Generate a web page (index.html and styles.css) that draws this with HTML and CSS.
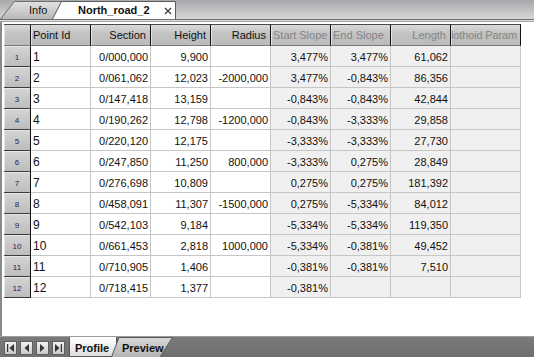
FILE: index.html
```html
<!DOCTYPE html>
<html>
<head>
<meta charset="utf-8">
<link rel="stylesheet" href="styles.css">
</head>
<body>
<div class="window">
  <div class="tabbar">
    <div class="tab tab-info">
      <svg class="tabshape" width="63" height="19" viewBox="0 0 63 19">
        <defs><linearGradient id="gi" x1="0" y1="0" x2="0" y2="1"><stop offset="0" stop-color="#e2e2e2"/><stop offset="1" stop-color="#b9b9b9"/></linearGradient></defs>
        <path d="M0.5 19 L14.5 1.5 L62.5 1.5 L62.5 19" fill="url(#gi)" stroke="#6e6e6e"/>
      </svg>
      <span class="tablabel">Info</span>
    </div>
    <div class="tab tab-active">
      <svg class="tabshape" width="125" height="19" viewBox="0 0 125 19">
        <path d="M0.5 19 L9.5 1.5 L123.5 1.5 L123.5 19" fill="#ffffff" stroke="#5a5a5a"/>
      </svg>
      <span class="tablabel bold">North_road_2</span>
      <svg class="close" width="8" height="8" viewBox="0 0 8 8"><path d="M1 1 L7 7 M7 1 L1 7" stroke="#3c3c3c" stroke-width="1.3"/></svg>
    </div>
  </div>
  <div class="rule"></div>
  <div class="frame">
    <div class="grid">
      <div class="h corner"></div>
      <div class="h left">Point Id</div>
      <div class="h">Section</div>
      <div class="h">Height</div>
      <div class="h">Radius</div>
      <div class="h left dim">Start Slope</div>
      <div class="h left dim">End Slope</div>
      <div class="h dim">Length</div>
      <div class="h dim clip"><span class="cliptext">Clothoid Param</span></div>

      <div class="rh">1</div><div class="c l">1</div><div class="c">0/000,000</div><div class="c">9,900</div><div class="c"></div><div class="c g">3,477%</div><div class="c g">3,477%</div><div class="c g">61,062</div><div class="c g"></div>
      <div class="rh">2</div><div class="c l">2</div><div class="c">0/061,062</div><div class="c">12,023</div><div class="c">-2000,000</div><div class="c g">3,477%</div><div class="c g">-0,843%</div><div class="c g">86,356</div><div class="c g"></div>
      <div class="rh">3</div><div class="c l">3</div><div class="c">0/147,418</div><div class="c">13,159</div><div class="c"></div><div class="c g">-0,843%</div><div class="c g">-0,843%</div><div class="c g">42,844</div><div class="c g"></div>
      <div class="rh">4</div><div class="c l">4</div><div class="c">0/190,262</div><div class="c">12,798</div><div class="c">-1200,000</div><div class="c g">-0,843%</div><div class="c g">-3,333%</div><div class="c g">29,858</div><div class="c g"></div>
      <div class="rh">5</div><div class="c l">5</div><div class="c">0/220,120</div><div class="c">12,175</div><div class="c"></div><div class="c g">-3,333%</div><div class="c g">-3,333%</div><div class="c g">27,730</div><div class="c g"></div>
      <div class="rh">6</div><div class="c l">6</div><div class="c">0/247,850</div><div class="c">11,250</div><div class="c">800,000</div><div class="c g">-3,333%</div><div class="c g">0,275%</div><div class="c g">28,849</div><div class="c g"></div>
      <div class="rh">7</div><div class="c l">7</div><div class="c">0/276,698</div><div class="c">10,809</div><div class="c"></div><div class="c g">0,275%</div><div class="c g">0,275%</div><div class="c g">181,392</div><div class="c g"></div>
      <div class="rh">8</div><div class="c l">8</div><div class="c">0/458,091</div><div class="c">11,307</div><div class="c">-1500,000</div><div class="c g">0,275%</div><div class="c g">-5,334%</div><div class="c g">84,012</div><div class="c g"></div>
      <div class="rh">9</div><div class="c l">9</div><div class="c">0/542,103</div><div class="c">9,184</div><div class="c"></div><div class="c g">-5,334%</div><div class="c g">-5,334%</div><div class="c g">119,350</div><div class="c g"></div>
      <div class="rh">10</div><div class="c l">10</div><div class="c">0/661,453</div><div class="c">2,818</div><div class="c">1000,000</div><div class="c g">-5,334%</div><div class="c g">-0,381%</div><div class="c g">49,452</div><div class="c g"></div>
      <div class="rh">11</div><div class="c l">11</div><div class="c">0/710,905</div><div class="c">1,406</div><div class="c"></div><div class="c g">-0,381%</div><div class="c g">-0,381%</div><div class="c g">7,510</div><div class="c g"></div>
      <div class="rh">12</div><div class="c l">12</div><div class="c">0/718,415</div><div class="c">1,377</div><div class="c"></div><div class="c g">-0,381%</div><div class="c g"></div><div class="c g"></div><div class="c g"></div>
    </div>
  </div>
  <div class="bottombar">
    <div class="navs">
      <div class="nav"><svg width="9" height="8" viewBox="0 0 9 8"><rect x="1" y="0" width="1.2" height="8" fill="#333"/><path d="M8 0 L8 8 L3.5 4 Z" fill="#333"/></svg></div>
      <div class="nav"><svg width="9" height="8" viewBox="0 0 9 8"><path d="M7 0 L7 8 L2.5 4 Z" fill="#333"/></svg></div>
      <div class="nav"><svg width="9" height="8" viewBox="0 0 9 8"><path d="M2 0 L2 8 L6.5 4 Z" fill="#333"/></svg></div>
      <div class="nav"><svg width="9" height="8" viewBox="0 0 9 8"><path d="M1 0 L1 8 L5.5 4 Z" fill="#333"/><rect x="6.8" y="0" width="1.2" height="8" fill="#333"/></svg></div>
    </div>
    <div class="stab stab-profile">
      <svg class="tabshape" width="48" height="20" viewBox="0 0 48 20">
        <defs><linearGradient id="gp" x1="0" y1="0" x2="0" y2="1"><stop offset="0" stop-color="#ffffff"/><stop offset="1" stop-color="#dcdcdc"/></linearGradient></defs>
        <path d="M0.5 0 L0.5 19.5 L47.5 19.5 L47.5 0" fill="url(#gp)" stroke="#5a5a5a"/>
      </svg>
      <span class="stablabel">Profile</span>
    </div>
    <div class="stab stab-preview">
      <svg class="tabshape" width="62" height="20" viewBox="0 0 62 20">
        <defs><linearGradient id="gv" x1="0" y1="0" x2="0" y2="1"><stop offset="0" stop-color="#d8d8d8"/><stop offset="1" stop-color="#b4b4b4"/></linearGradient></defs>
        <path d="M0.5 20 L8 0.5 L61.5 0.5 L49 20" fill="url(#gv)" stroke="#5a5a5a"/>
      </svg>
      <span class="stablabel">Preview</span>
    </div>
  </div>
</div>
</body>
</html>
```

FILE: styles.css
```css
* { box-sizing: border-box; }
html, body { margin: 0; padding: 0; }
body {
  width: 534px;
  height: 357px;
  overflow: hidden;
  background: #ffffff;
  font-family: "Liberation Sans", Arial, sans-serif;
  font-size: 11px;
  color: #111;
}
.window {
  display: flex;
  flex-direction: column;
  width: 534px;
  height: 357px;
}
.tabbar {
  height: 19px;
  display: flex;
  align-items: flex-end;
  background: linear-gradient(#a6a8ab, #d6d6d6);
  flex: none;
}
.tab {
  position: relative;
  height: 19px;
  display: flex;
  align-items: center;
}
.tabshape {
  position: absolute;
  left: 0;
  top: 0;
}
.tablabel {
  position: relative;
  line-height: 19px;
  padding-top: 1px;
}
.bold { font-weight: bold; }
.tab-info {
  width: 63px;
  padding-left: 29px;
}
.tab-active {
  width: 125px;
  margin-left: -11px;
  padding-left: 26px;
}
.close {
  position: relative;
  margin-left: 14px;
  margin-top: 2px;
}
.rule {
  height: 3px;
  flex: none;
  border-top: 1px solid #6e6e6e;
  border-bottom: 1px solid #a4a4a4;
  background: #dedede;
}
.frame {
  flex: 1;
  border-left: 2px solid #8a8a8a;
  padding: 2px 0 0 2px;
  background: #ffffff;
  overflow: hidden;
}
.grid {
  display: grid;
  grid-template-columns: 27px repeat(7, 60px) 70px;
  grid-template-rows: 22px;
  grid-auto-rows: 21px;
  width: 517px;
}
.h {
  background: linear-gradient(#d9d9d9, #c2c2c2 45%, #bbbbbb);
  border-top: 1px solid #4a4a4a;
  border-right: 1px solid #111;
  border-bottom: 1px solid #7a7a7a;
  box-shadow: inset 1px 0 #e4e4e4;
  display: flex;
  align-items: center;
  justify-content: flex-end;
  padding: 0 4px 0 3px;
  white-space: nowrap;
  overflow: hidden;
  color: #111;
}
.h.left { justify-content: flex-start; padding-left: 2px; }
.h.dim { color: #858585; }
.h.clip {
  padding: 0;
  justify-content: flex-end;
}
.cliptext {
  display: block;
  width: 66px;
  overflow: hidden;
  direction: rtl;
  white-space: nowrap;
  letter-spacing: -0.15px;
  text-align: left;
  flex: none;
  margin-right: 3px;
}
.corner { border-right-color: #111; }
.rh {
  background: linear-gradient(#d4d4d4, #bdbdbd);
  border-right: 1px solid #111;
  border-bottom: 1px solid #3c3c3c;
  box-shadow: inset 1px 1px #e6e6e6;
  display: flex;
  align-items: center;
  justify-content: center;
  font-size: 8px;
  color: #23234a;
  padding-top: 2px;
}
.c {
  border-right: 1px solid #c6c6c6;
  border-bottom: 1px solid #c6c6c6;
  display: flex;
  align-items: center;
  justify-content: flex-end;
  padding: 1px 2px 0;
  white-space: nowrap;
  background: #ffffff;
  color: #111;
}
.c.l { justify-content: flex-start; font-size: 12px; }
.c.g { background: #f0f0f0; }
.bottombar {
  height: 21px;
  flex: none;
  display: flex;
  align-items: flex-end;
  background: linear-gradient(#9c9c9c 0, #9c9c9c 1px, #7a7a7a 1px, #6f6f6f);
  padding-left: 4px;
}
.navs {
  display: flex;
  gap: 3px;
  align-self: center;
  margin-top: 2px;
}
.nav {
  width: 13px;
  height: 14px;
  background: linear-gradient(#f2f2f2, #c9c9c9);
  border: 1px solid #5e5e5e;
  display: flex;
  align-items: center;
  justify-content: center;
}
.stab {
  position: relative;
  height: 20px;
  display: flex;
  align-items: center;
}
.stablabel {
  position: relative;
  font-weight: bold;
  font-size: 11px;
  color: #111;
  padding-top: 1px;
}
.stab-profile {
  width: 48px;
  margin-left: 4px;
  padding-left: 6px;
}
.stab-preview {
  width: 62px;
  margin-left: -6px;
  padding-left: 11px;
}
```
